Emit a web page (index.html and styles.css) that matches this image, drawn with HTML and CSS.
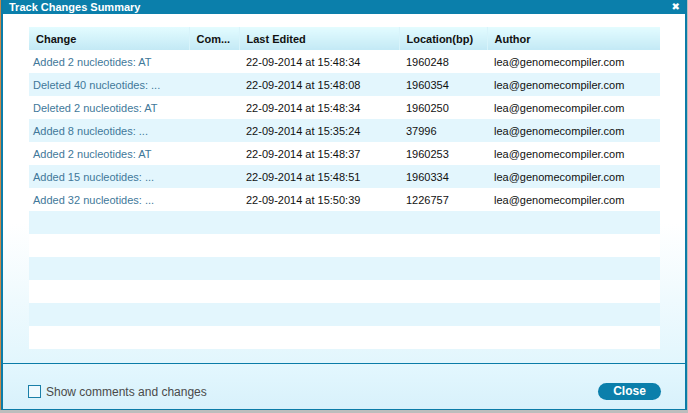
FILE: index.html
```html
<!DOCTYPE html>
<html>
<head>
<meta charset="utf-8">
<link rel="stylesheet" href="styles.css">
</head>
<body>
<div class="dialog">
  <div class="titlebar">
    <span class="title">Track Changes Summary</span>
    <span class="close-x">&#x2716;</span>
  </div>
  <div class="content">
    <table class="grid">
      <colgroup>
        <col class="c1"><col class="c2"><col class="c3"><col class="c4"><col class="c5">
      </colgroup>
      <thead>
        <tr><th>Change</th><th>Com...</th><th>Last Edited</th><th>Location(bp)</th><th>Author</th></tr>
      </thead>
      <tbody>
        <tr><td class="chg">Added 2 nucleotides: AT</td><td></td><td>22-09-2014 at 15:48:34</td><td>1960248</td><td>lea@genomecompiler.com</td></tr>
        <tr><td class="chg">Deleted 40 nucleotides: ...</td><td></td><td>22-09-2014 at 15:48:08</td><td>1960354</td><td>lea@genomecompiler.com</td></tr>
        <tr><td class="chg">Deleted 2 nucleotides: AT</td><td></td><td>22-09-2014 at 15:48:34</td><td>1960250</td><td>lea@genomecompiler.com</td></tr>
        <tr><td class="chg">Added 8 nucleotides: ...</td><td></td><td>22-09-2014 at 15:35:24</td><td>37996</td><td>lea@genomecompiler.com</td></tr>
        <tr><td class="chg">Added 2 nucleotides: AT</td><td></td><td>22-09-2014 at 15:48:37</td><td>1960253</td><td>lea@genomecompiler.com</td></tr>
        <tr><td class="chg">Added 15 nucleotides: ...</td><td></td><td>22-09-2014 at 15:48:51</td><td>1960334</td><td>lea@genomecompiler.com</td></tr>
        <tr><td class="chg">Added 32 nucleotides: ...</td><td></td><td>22-09-2014 at 15:50:39</td><td>1226757</td><td>lea@genomecompiler.com</td></tr>
        <tr><td></td><td></td><td></td><td></td><td></td></tr>
        <tr><td></td><td></td><td></td><td></td><td></td></tr>
        <tr><td></td><td></td><td></td><td></td><td></td></tr>
        <tr><td></td><td></td><td></td><td></td><td></td></tr>
        <tr><td></td><td></td><td></td><td></td><td></td></tr>
        <tr><td></td><td></td><td></td><td></td><td></td></tr>
      </tbody>
    </table>
  </div>
  <div class="footer">
    <label class="check"><span class="box"></span><span>Show comments and changes</span></label>
    <button class="btn">Close</button>
  </div>
</div>
</body>
</html>
```
FILE: styles.css
```css
html, body {
  margin: 0;
  padding: 0;
  background: #bdbdbd;
  font-family: "Liberation Sans", Arial, sans-serif;
}
.dialog {
  width: 686px;
  height: 410px;
  box-sizing: border-box;
  border-left: 2px solid #0b7ca8;
  border-right: 2px solid #0b7ca8;
  border-bottom: 1px solid #0b7ca8;
  box-shadow: -1px 0 0 #c98a4a;
  margin-left: 1px;
  display: flex;
  flex-direction: column;
  background: #fff;
}
.titlebar {
  height: 14px;
  background: #0b7fab;
  color: #fff;
  display: flex;
  align-items: center;
  justify-content: space-between;
  padding: 0 5px 0 6px;
  flex: none;
}
.title {
  font-size: 11px;
  font-weight: bold;
  line-height: 14px;
}
.close-x {
  font-size: 10px;
  font-weight: bold;
  line-height: 14px;
  font-family: "DejaVu Sans", sans-serif;
}
.content {
  height: 350px;
  box-sizing: border-box;
  padding: 13px 24px 0 26px;
  background: linear-gradient(#ffffff 0%, #ffffff 60%, #e2f6fd 100%);
  border-bottom: 1px solid #0b7ca8;
  flex: none;
}
.grid {
  border-collapse: collapse;
  width: 631px;
  table-layout: fixed;
  font-size: 11px;
}
.c1 { width: 160px; }
.c2 { width: 50px; }
.c3 { width: 160px; }
.c4 { width: 88px; }
.c5 { width: 173px; }
.grid th {
  height: 23px;
  padding: 0 0 0 7px;
  text-align: left;
  font-weight: bold;
  color: #111;
  background: linear-gradient(#e3fcff, #c3e9f5);
  border-right: 1px solid #d8f4fb;
  white-space: nowrap;
  overflow: hidden;
}
.grid th:last-child { border-right: none; }
.grid td {
  height: 23px;
  padding: 0 0 0 7px;
  color: #111;
  white-space: nowrap;
  overflow: hidden;
}
.grid td.chg {
  color: #41789a;
  padding-left: 4px;
}
.grid tbody tr:nth-child(odd) td { background: #ffffff; }
.grid tbody tr:nth-child(even) td { background: #e3f6fd; }
.footer {
  flex: 1;
  background: linear-gradient(#e3f7fe, #d8f1fb);
  display: flex;
  align-items: center;
  justify-content: space-between;
  padding: 10px 24px 0 25px;
}
.check {
  display: flex;
  align-items: center;
  gap: 5px;
  font-size: 12px;
  color: #4a4a4a;
}
.box {
  width: 13px;
  height: 13px;
  box-sizing: border-box;
  border: 1.5px solid #1a7fa8;
  background: #eef9fe;
}
.btn {
  width: 63px;
  height: 17px;
  border: none;
  border-radius: 9px;
  background: #0b7fab;
  color: #fff;
  font-family: "Liberation Sans", Arial, sans-serif;
  font-weight: bold;
  font-size: 12px;
  padding: 0;
  line-height: 17px;
}
```
